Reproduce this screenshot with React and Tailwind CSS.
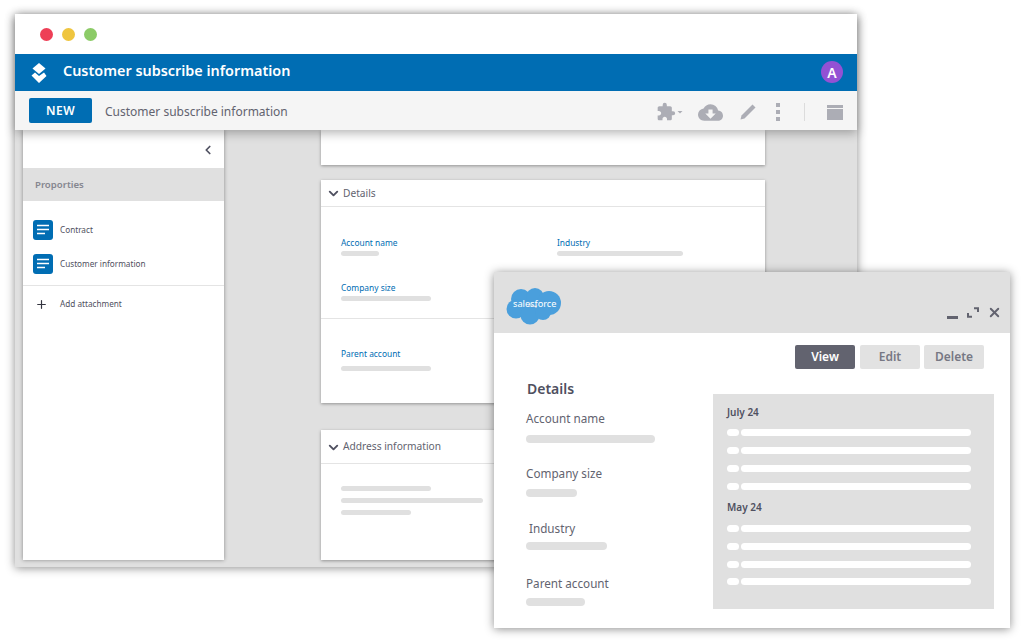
import { ChevronDown, ChevronLeft, Plus, X } from "lucide-react";
import { MdCloudDownload, MdExtension, MdArrowDropDown } from "react-icons/md";

const font = "font-['Noto_Sans','Open_Sans',sans-serif]";

function Bar({ className }) {
  return <div className={`h-[5px] rounded-full bg-[#e0e0e0] ${className}`} />;
}

function DocIcon() {
  return (
    <svg width="20" height="20" viewBox="0 0 20 20">
      <rect width="20" height="20" rx="3" fill="#006db3" />
      <path d="M4 5.500h12M4 9.500h12M4 13.500h8" stroke="#fff" strokeWidth="1.600" />
    </svg>
  );
}

function Logo() {
  return (
    <svg width="16" height="20" viewBox="0 0 16 20">
      <path d="M8 0l6.500 5.500L8 11 1.500 5.500z" fill="#fff" />
      <path d="M0.500 12.500l3.500-3 4 3.500 5-3.500 2.500 3.500L8 20z" fill="#fff" />
    </svg>
  );
}

function SalesforceLogo() {
  return (
    <div className="relative w-[56px] h-[39px]">
      <svg width="56" height="39" viewBox="0 0 56 39">
        <g fill="#4a9fdc">
          <circle cx="15" cy="13" r="10" />
          <circle cx="29" cy="11" r="9" />
          <circle cx="43" cy="17" r="12" />
          <circle cx="10" cy="23" r="9.500" />
          <circle cx="24" cy="29" r="9.500" />
          <circle cx="37" cy="26" r="8" />
        </g>
      </svg>
      <span className="absolute left-[7px] top-[11px] text-[9.200px] leading-[14px] text-white">salesforce</span>
    </div>
  );
}

function Field({ label, x, mt, barMt, barW }) {
  return (
    <div className={mt}>
      <div className={`text-[11.700px] leading-[18px] text-[#62636f] ${x}`}>{label}</div>
      <div className={`h-2 rounded-full bg-[#e0e0e0] ${barMt} ${barW}`} />
    </div>
  );
}

function ActivityRow({ mt }) {
  return (
    <div className={`flex gap-[2px] ${mt}`}>
      <div className="h-[7px] w-3 rounded-full bg-white" />
      <div className="h-[7px] w-[230px] rounded-full bg-white" />
    </div>
  );
}

function CardLabel({ children }) {
  return <div className="text-[8.400px] leading-[12px] text-[#006db3]">{children}</div>;
}

function Modal() {
  return (
    <div className="absolute left-[494px] top-[272px] w-[516px] h-[356px] bg-white shadow-[0_1px_9px_rgba(0,0,0,0.45)]">
      <div className="h-[61px] bg-[#e0e0e0] flex justify-between pl-3 pr-[8px]">
        <div className="mt-[14px]"><SalesforceLogo /></div>
        <div className="flex items-start gap-[9px] mt-[35px] text-[#62636f]">
          <div className="mt-[9px] h-[3px] w-[11px] bg-[#62636f]" />
          <svg width="12" height="11" viewBox="0 0 12 11">
            <path d="M7 1.200h4V5M5 9.800H1V6" fill="none" stroke="#62636f" strokeWidth="2" />
          </svg>
          <X size={15} strokeWidth={3} className="-mt-[2px] -ml-[1px]" />
        </div>
      </div>
      <div className="flex justify-end gap-1 pr-[26px] pt-3">
        <div className="w-[60px] h-6 rounded-[2px] bg-[#62636f] text-white text-[12px] font-semibold leading-6 text-center">View</div>
        <div className="w-[60px] h-6 ml-[1px] rounded-[2px] bg-[#e2e2e2] text-[#777884] text-[12px] font-semibold leading-6 text-center">Edit</div>
        <div className="w-[60px] h-6 rounded-[2px] bg-[#e2e2e2] text-[#777884] text-[12px] font-semibold leading-6 text-center">Delete</div>
      </div>
      <div className="flex pl-8 mt-[25px] justify-between pr-4">
        <div className="-mt-[15px] w-[160px]">
          <div className="ml-[1px] text-[14px] leading-[20px] font-semibold text-[#4f5060]">Details</div>
          <Field label="Account name" mt="mt-[10px]" barMt="mt-2" barW="w-[129px]" x="" />
          <Field label="Company size" mt="mt-[21px]" barMt="mt-[7px]" barW="w-[51px]" x="" />
          <Field label="Industry" mt="mt-[22px]" barMt="mt-[5px]" barW="w-[81px]" x="ml-[3px]" />
          <Field label="Parent account" mt="mt-[24px]" barMt="mt-[6px]" barW="w-[59px]" x="" />
        </div>
        <div className="w-[281px] h-[215px] bg-[#e0e0e0] px-[14px] pt-[12px]">
          <div className="text-[10px] leading-[13px] font-semibold text-[#4f5060]">July 24</div>
          <ActivityRow mt="mt-[10px]" />
          <ActivityRow mt="mt-[11px]" />
          <ActivityRow mt="mt-[11px]" />
          <ActivityRow mt="mt-[11px]" />
          <div className="mt-[11px] text-[10px] leading-[13px] font-semibold text-[#4f5060]">May 24</div>
          <ActivityRow mt="mt-[11px]" />
          <ActivityRow mt="mt-[11px]" />
          <ActivityRow mt="mt-[11px]" />
          <ActivityRow mt="mt-[10px]" />
        </div>
      </div>
    </div>
  );
}

export default function App() {
  return (
    <div className={`relative w-[1024px] h-[643px] overflow-hidden bg-white ${font}`}>
      <div className="pt-[14px] pl-[15px]">
        <div className="w-[842px] h-[553px] bg-[#e0e0e0] shadow-[0_1px_9px_rgba(0,0,0,0.45)] flex flex-col">
          <div className="relative z-10 shadow-[0_3px_10px_rgba(0,0,0,0.3)]">
            <div className="h-10 bg-white flex items-center gap-[9px] pl-[25px]">
              <div className="w-[13px] h-[13px] rounded-full bg-[#ee3f56]" />
              <div className="w-[13px] h-[13px] rounded-full bg-[#efc53f]" />
              <div className="w-[13px] h-[13px] rounded-full bg-[#8ccb67]" />
            </div>
            <div className="h-[37px] bg-[#006db3] flex items-center justify-between pl-[16px] pr-[14px]">
              <div className="flex items-center gap-[16px]">
                <Logo />
                <span className="text-[14.400px] font-semibold text-white -mt-[3px]">Customer subscribe information</span>
              </div>
              <div className="w-[22px] h-[22px] rounded-full bg-[#9351d4] text-white text-[14px] font-semibold flex items-center justify-center -mt-[1px]">A</div>
            </div>
            <div className="h-[39px] bg-[#f5f5f5] flex items-center justify-between pl-[14px] pr-[14px]">
              <div className="flex items-center gap-[13px]">
                <div className="w-[63px] h-[25px] rounded-[2px] bg-[#006db3] text-white text-[12px] font-semibold tracking-[0.5px] flex items-center justify-center">NEW</div>
                <span className="text-[12px] text-[#62636f] mt-[3px]">Customer subscribe information</span>
              </div>
              <div className="flex items-center text-[#acadb5] mt-[3px]">
                <MdExtension size={20} />
                <MdArrowDropDown size={12} className="-ml-[2px]" />
                <MdCloudDownload size={25} className="ml-[12px]" />
                <svg width="16" height="16" viewBox="0 0 16 16" className="ml-[17px]">
                  <path d="M0.500 15.500l1-4L12.500 0.500l3 3L4.500 14.500z" fill="#acadb5" />
                </svg>
                <div className="ml-[20px] flex flex-col gap-[3px]">
                  <div className="w-1 h-1 bg-[#acadb5]" />
                  <div className="w-1 h-1 bg-[#acadb5]" />
                  <div className="w-1 h-1 bg-[#acadb5]" />
                </div>
                <div className="ml-[24px] w-px h-[18px] bg-[#dcdcdc]" />
                <div className="ml-[22px] w-4 h-[15px] bg-[#acadb5] flex flex-col pt-[3px]">
                  <div className="h-[1px] bg-[#f5f5f5]" />
                </div>
              </div>
            </div>
          </div>
          <div className="flex flex-1 pl-2 pb-[7px]">
            <div className="w-[201px] bg-white shadow-[0_0_4px_rgba(0,0,0,0.4)] text-[#4f5060]">
              <div className="h-[38px] flex items-center justify-end pr-[9px] pt-[2px]">
                <ChevronLeft size={14} strokeWidth={3} />
              </div>
              <div className="h-[33px] bg-[#e0e0e0] pl-3 flex items-center text-[9.600px] font-semibold text-[#85868f] pt-[2px]">Proporties</div>
              <div className="pt-[19px] pb-[11px] pl-[10px] flex flex-col gap-[14px] border-b border-[#e4e4e4]">
                <div className="flex items-center gap-[7px] text-[8.200px]"><DocIcon />Contract</div>
                <div className="flex items-center gap-[7px] text-[8.200px]"><DocIcon />Customer information</div>
              </div>
              <div className="flex items-center pl-3 gap-3 pt-[12px] text-[8.200px]">
                <Plus size={13} strokeWidth={2.200} className="text-[#33343f]" />
                Add attachment
              </div>
            </div>
            <div className="ml-[97px] w-[444px] flex flex-col">
              <div className="h-[35px] bg-white shadow-[0_1px_3px_rgba(0,0,0,0.35)]" />
              <div className="mt-[15px] h-[223px] bg-white shadow-[0_1px_3px_rgba(0,0,0,0.35)]">
                <div className="h-[27px] border-b border-[#e4e4e4] flex items-center gap-[2px] pl-[5px] text-[10.200px] text-[#62636f] pt-[1px]">
                  <ChevronDown size={15} strokeWidth={3} className="text-[#4f5060]" />Details
                </div>
                <div className="h-[112px] border-b border-[#e4e4e4] pl-5 pt-[30px]">
                  <div className="flex">
                    <div className="w-[216px]">
                      <CardLabel>Account name</CardLabel>
                      <Bar className="mt-[2px] w-[38px]" />
                    </div>
                    <div>
                      <CardLabel>Industry</CardLabel>
                      <Bar className="mt-[2px] w-[126px]" />
                    </div>
                  </div>
                  <div className="mt-[26px]">
                    <CardLabel>Company size</CardLabel>
                    <Bar className="mt-[2px] w-[90px]" />
                  </div>
                </div>
                <div className="pl-5 pt-[29px]">
                  <CardLabel>Parent account</CardLabel>
                  <Bar className="mt-[6px] w-[90px]" />
                </div>
              </div>
              <div className="mt-[27px] h-[130px] bg-white shadow-[0_1px_3px_rgba(0,0,0,0.35)]">
                <div className="h-[34px] border-b border-[#e4e4e4] flex items-center gap-[2px] pl-[5px] text-[10.200px] text-[#62636f] pt-[1px]">
                  <ChevronDown size={15} strokeWidth={3} className="text-[#4f5060]" />Address information
                </div>
                <div className="pl-5 pt-[22px] flex flex-col gap-[7px]">
                  <Bar className="w-[90px]" />
                  <Bar className="w-[142px]" />
                  <Bar className="w-[70px]" />
                </div>
              </div>
            </div>
          </div>
        </div>
      </div>
      <Modal />
    </div>
  );
}
